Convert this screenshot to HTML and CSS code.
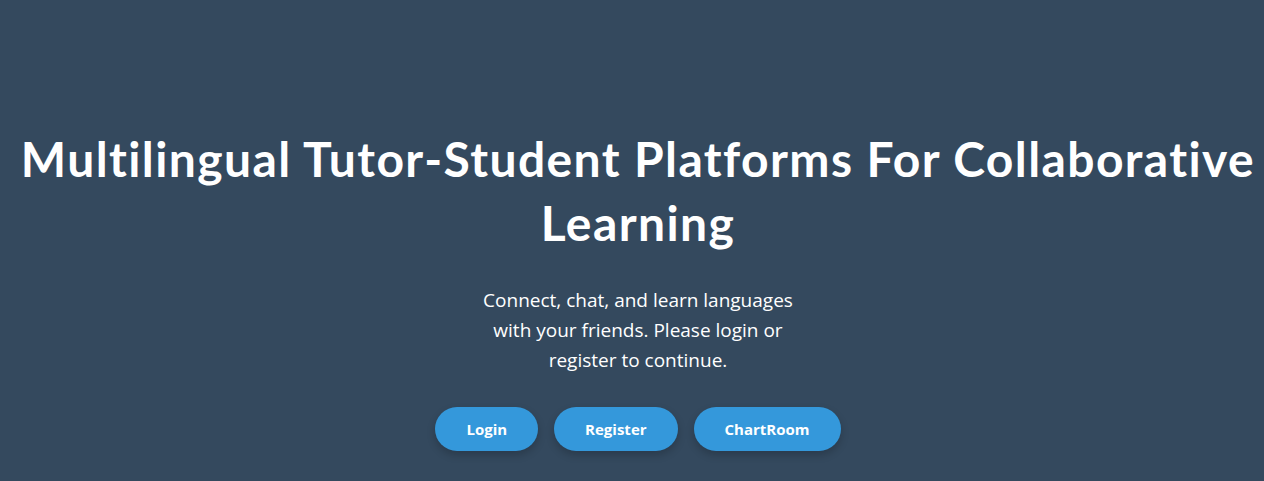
FILE: index.html
```html
<!DOCTYPE html>
<html lang="en">
<head>
    <meta charset="UTF-8">
    <meta name="viewport" content="width=device-width, initial-scale=1.0">
    <title>Multilingual Tutor-Student Platform</title>
    <link rel="stylesheet" href="styles.css">
</head>
<body>
    <div class="home-container">
        <h1 class="home-title">Multilingual Tutor-Student Platforms For Collaborative Learning</h1>
        <p class="home-text">Connect, chat, and learn languages with your friends. Please login or register to continue.</p>
        <div class="home-actions">
            <button class="home-button">Login</button>
            <button class="home-button">Register</button>
            <button class="home-button">ChartRoom</button>
        </div>
    </div>
</body>
</html>
```

FILE: styles.css
```css
/* Base styles */
body {
    font-family: "Open Sans", "Noto Sans", sans-serif;
    margin: 0;
    background-color: #34495e;
    color: white;
}

.home-container {
    padding: 127px 4px 40px 16px;
    text-align: center;
}

.home-title {
    font-family: Lato, "Open Sans", sans-serif;
    font-size: 48px;
    line-height: 64px;
    letter-spacing: 1.4px;
    font-weight: bold;
    margin: 0 0 30px 0;
}

.home-text {
    font-size: 19px;
    line-height: 30px;
    max-width: 330px;
    margin: 0 auto 32px auto;
}

/* Buttons */
.home-actions {
    display: flex;
    justify-content: center;
    gap: 16px;
}

.home-button {
    font-family: inherit;
    font-size: 15px;
    font-weight: bold;
    line-height: 20px;
    padding: 12px 31px;
    background: #3498db;
    color: white;
    border: none;
    border-radius: 25px;
    box-shadow: 0 4px 8px rgba(0,0,0,0.2);
    cursor: pointer;
}

.home-button:hover {
    background: #2980b9;
}
```
